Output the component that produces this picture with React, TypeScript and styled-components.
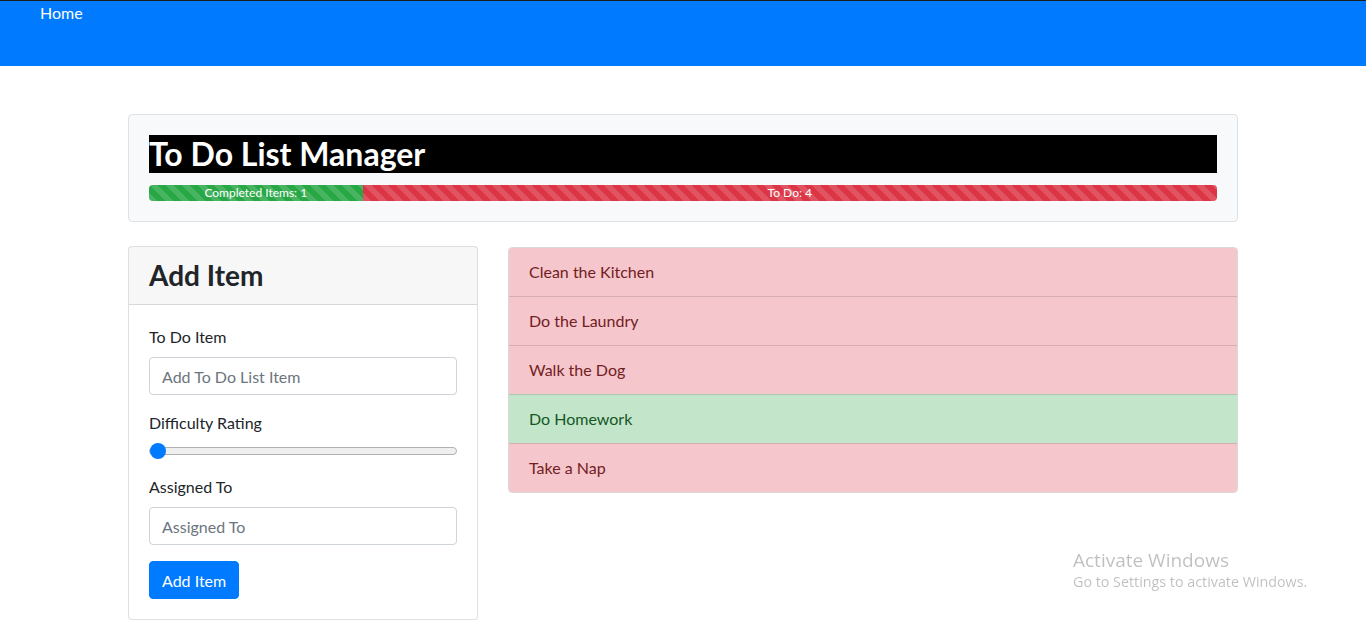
import styled, { createGlobalStyle } from "styled-components";

const GlobalStyle = createGlobalStyle`
  * {
    box-sizing: border-box;
  }
  body {
    margin: 0;
    font-family: Lato, "Segoe UI", Roboto, sans-serif;
    font-size: 16px;
    line-height: 1.5;
    color: #212529;
    background: #fff;
    border-top: 1px solid #1b1e21;
  }
`;

const Navbar = styled.nav`
  height: 65px;
  background-color: #007bff;
  padding: 0 40px;
`;

const NavLink = styled.a`
  color: #fff;
  font-size: 16px;
  text-decoration: none;
`;

const Container = styled.div`
  max-width: 1140px;
  margin: 0 auto;
  padding: 48px 15px 0;
`;

const Jumbo = styled.header`
  background-color: #f8f9fa;
  border: 1px solid #dee2e6;
  border-radius: 4px;
  padding: 20px;
  margin-bottom: 24px;
`;

const Title = styled.h1`
  margin: 0 0 12px;
  background-color: #000;
  color: #fff;
  font-size: 32px;
  font-weight: 700;
  line-height: 38px;
  height: 38px;
`;

const Progress = styled.div`
  display: flex;
  height: 16px;
  overflow: hidden;
  border-radius: 4px;
  background-color: #e9ecef;
  font-size: 12px;
  line-height: 16px;
`;

const Bar = styled.div<{ $color: string }>`
  display: flex;
  justify-content: center;
  color: #fff;
  white-space: nowrap;
  background-color: ${(p) => p.$color};
  background-image: linear-gradient(
    45deg,
    rgba(255, 255, 255, 0.15) 25%,
    transparent 25%,
    transparent 50%,
    rgba(255, 255, 255, 0.15) 50%,
    rgba(255, 255, 255, 0.15) 75%,
    transparent 75%,
    transparent
  );
  background-size: 16px 16px;
`;

const Row = styled.div`
  display: grid;
  grid-template-columns: 350px 1fr;
  gap: 30px;
  align-items: start;
`;

const Card = styled.section`
  border: 1px solid rgba(0, 0, 0, 0.125);
  border-radius: 4px;
  background: #fff;
`;

const CardHeader = styled.div`
  background-color: rgba(0, 0, 0, 0.03);
  border-bottom: 1px solid rgba(0, 0, 0, 0.125);
  padding: 12px 20px;
`;

const CardTitle = styled.h3`
  margin: 0;
  font-size: 28px;
  font-weight: 700;
  line-height: 33px;
`;

const CardBody = styled.form`
  padding: 20px;
`;

const FormGroup = styled.div`
  margin-bottom: 16px;
`;

const Label = styled.label`
  display: block;
  margin-bottom: 8px;
`;

const Input = styled.input`
  display: block;
  width: 100%;
  height: 38px;
  padding: 6px 12px;
  font-family: inherit;
  font-size: 16px;
  color: #495057;
  border: 1px solid #ced4da;
  border-radius: 4px;
  &::placeholder {
    color: #6c757d;
  }
`;

const Range = styled.input`
  display: block;
  width: 100%;
  height: 16px;
  margin: 0;
  -webkit-appearance: none;
  appearance: none;
  background: transparent;
  &::-webkit-slider-runnable-track {
    height: 8px;
    border-radius: 4px;
    background: #efefef;
    border: 1px solid #b2b2b2;
  }
  &::-webkit-slider-thumb {
    -webkit-appearance: none;
    width: 16px;
    height: 16px;
    margin-top: -5px;
    border-radius: 50%;
    background: #007bff;
    border: none;
  }
`;

const Button = styled.button`
  height: 38px;
  padding: 6px 12px;
  font-family: inherit;
  font-size: 16px;
  color: #fff;
  background-color: #007bff;
  border: 1px solid #007bff;
  border-radius: 4px;
`;

const List = styled.ul`
  list-style: none;
  margin: 1px 0 0;
  padding: 0;
  border: 1px solid rgba(0, 0, 0, 0.15);
  border-radius: 4px;
  overflow: hidden;
`;

const Item = styled.li<{ $done: boolean }>`
  padding: 12px 20px;
  background-color: ${(p) => (p.$done ? "#c3e6cb" : "#f5c6cb")};
  color: ${(p) => (p.$done ? "#155724" : "#721c24")};
  & + & {
    border-top: 1px solid rgba(0, 0, 0, 0.125);
  }
`;

const Watermark = styled.div`
  position: fixed;
  left: 1073px;
  top: 548px;
  color: rgba(0, 0, 0, 0.25);
  font-family: "Open Sans", sans-serif;
  line-height: 1.3;
`;

const WatermarkTitle = styled.div`
  font-size: 19px;
`;

const WatermarkText = styled.div`
  font-size: 14.3px;
`;

const items = [
  { text: "Clean the Kitchen", done: false },
  { text: "Do the Laundry", done: false },
  { text: "Walk the Dog", done: false },
  { text: "Do Homework", done: true },
  { text: "Take a Nap", done: false },
];

export default function App() {
  const completed = items.filter((i) => i.done).length;
  const todo = items.length - completed;
  const pct = (completed / items.length) * 100;
  return (
    <>
      <GlobalStyle />
      <Navbar>
        <NavLink href="#">Home</NavLink>
      </Navbar>
      <Container>
        <Jumbo>
          <Title>To Do List Manager</Title>
          <Progress>
            <Bar $color="#28a745" style={{ width: `${pct}%` }}>
              Completed Items: {completed}
            </Bar>
            <Bar $color="#dc3545" style={{ width: `${100 - pct}%` }}>
              To Do: {todo}
            </Bar>
          </Progress>
        </Jumbo>
        <Row>
          <Card>
            <CardHeader>
              <CardTitle>Add Item</CardTitle>
            </CardHeader>
            <CardBody onSubmit={(e) => e.preventDefault()}>
              <FormGroup>
                <Label>To Do Item</Label>
                <Input placeholder="Add To Do List Item" />
              </FormGroup>
              <FormGroup>
                <Label>Difficulty Rating</Label>
                <Range type="range" min={1} max={5} defaultValue={1} />
              </FormGroup>
              <FormGroup>
                <Label>Assigned To</Label>
                <Input placeholder="Assigned To" />
              </FormGroup>
              <Button type="submit">Add Item</Button>
            </CardBody>
          </Card>
          <List>
            {items.map((i) => (
              <Item key={i.text} $done={i.done}>
                {i.text}
              </Item>
            ))}
          </List>
        </Row>
      </Container>
      <Watermark>
        <WatermarkTitle>Activate Windows</WatermarkTitle>
        <WatermarkText>Go to Settings to activate Windows.</WatermarkText>
      </Watermark>
    </>
  );
}
